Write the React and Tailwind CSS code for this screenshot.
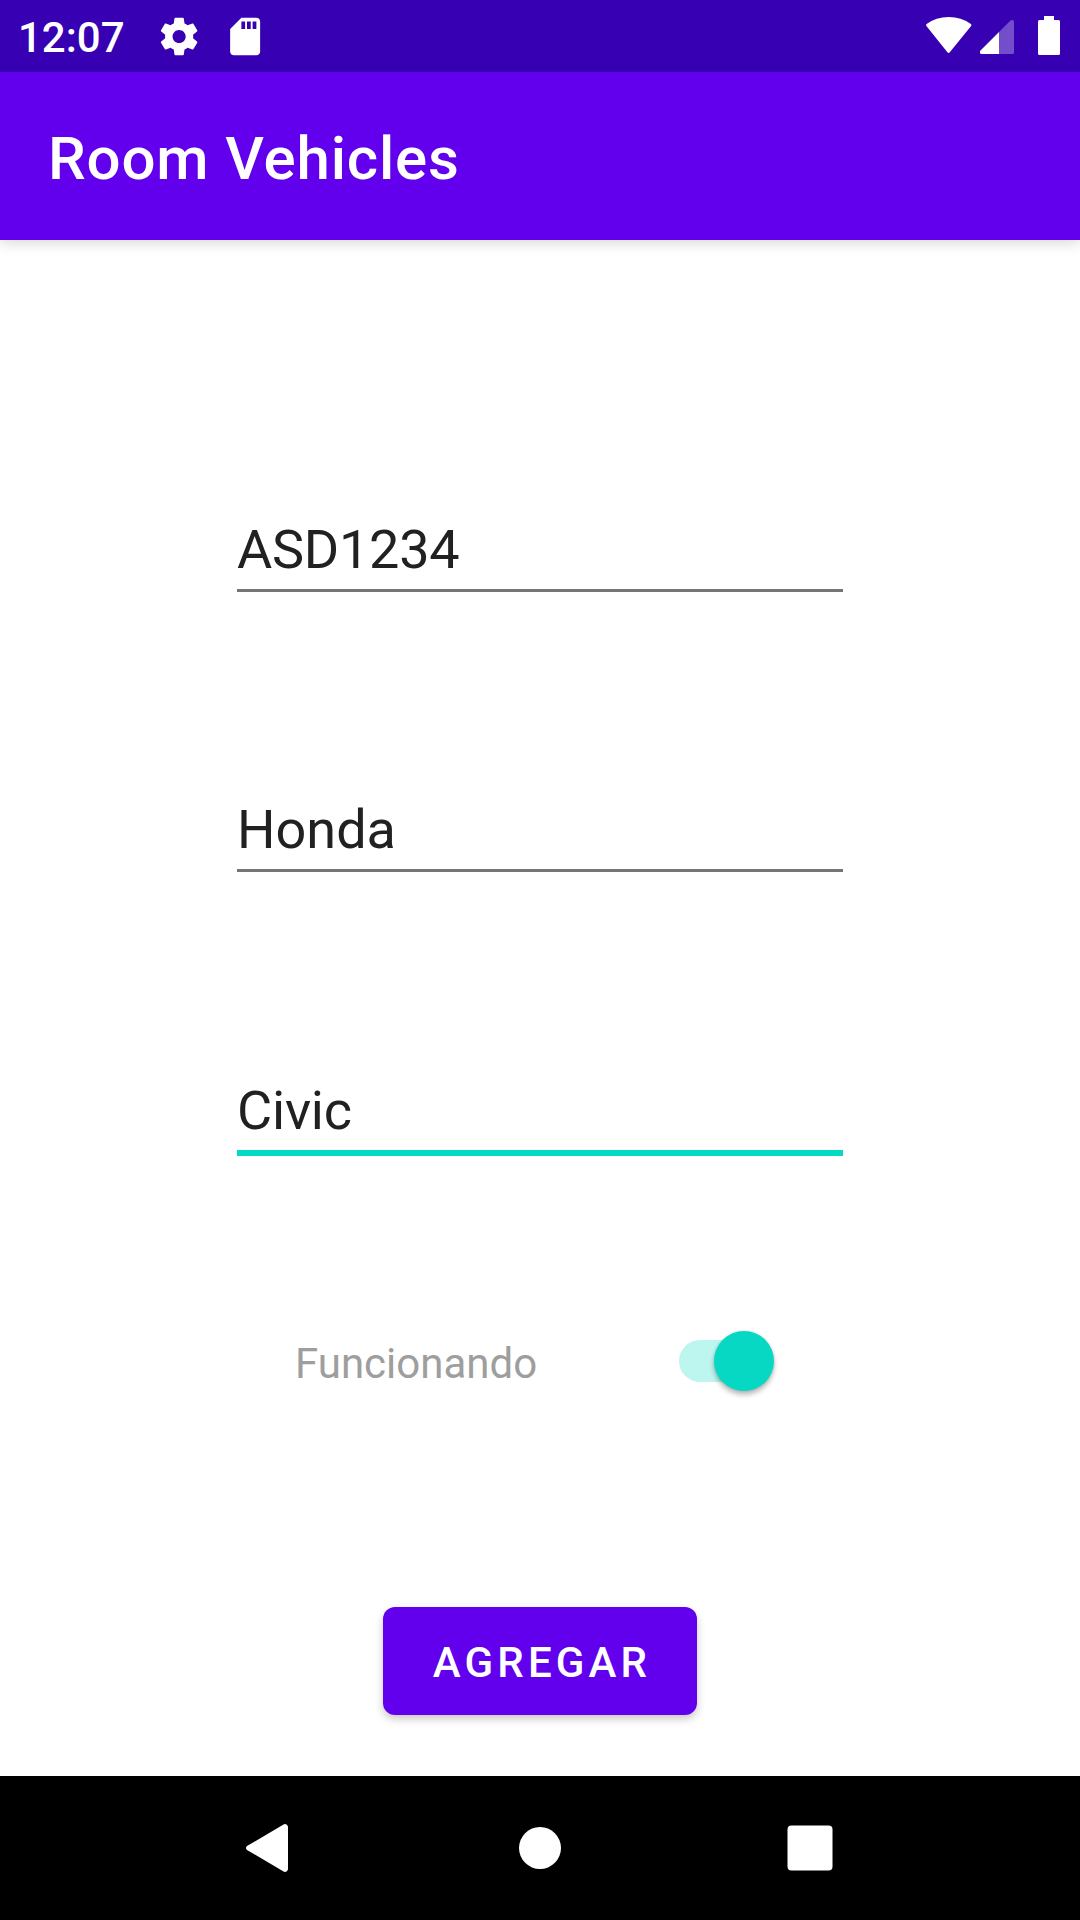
function SettingsIcon() {
  return (
    <svg className="ml-[52.5px] size-[45px]" viewBox="0 0 24 24" fill="currentColor">
      <path transform="translate(-0.2 0)" d="M19.43 12.98c.04-.32.07-.64.07-.98s-.03-.66-.07-.98l2.11-1.65c.19-.15.24-.42.12-.64l-2-3.46c-.12-.22-.39-.3-.61-.22l-2.49 1c-.52-.4-1.08-.73-1.69-.98l-.38-2.65C14.46 2.18 14.25 2 14 2h-4c-.25 0-.46.18-.49.42l-.38 2.65c-.61.25-1.17.59-1.69.98l-2.49-1c-.23-.09-.49 0-.61.22l-2 3.46c-.13.22-.07.49.12.64l2.11 1.65c-.04.32-.07.65-.07.98s.03.66.07.98l-2.11 1.65c-.19.15-.24.42-.12.64l2 3.46c.12.22.39.3.61.22l2.49-1c.52.4 1.08.73 1.69.98l.38 2.65c.03.24.24.42.49.42h4c.25 0 .46-.18.49-.42l.38-2.65c.61-.25 1.17-.59 1.69-.98l2.49 1c.23.09.49 0 .61-.22l2-3.46c.12-.22.07-.49-.12-.64l-2.11-1.65zM12 15.5c-1.93 0-3.5-1.57-3.5-3.5s1.57-3.5 3.5-3.5 3.5 1.57 3.5 3.5-1.57 3.5-3.5 3.5z" />
    </svg>
  );
}

function SdCardIcon() {
  return (
    <svg className="ml-[21px] size-[45px]" viewBox="0 0 24 24" fill="currentColor">
      <path transform="translate(-0.2 0)" d="M18 2h-8L4.02 8 4 20c0 1.1.9 2 2 2h12c1.1 0 2-.9 2-2V4c0-1.1-.9-2-2-2zm-6 6h-2V4h2v4zm3 0h-2V4h2v4zm3 0h-2V4h2v4z" />
    </svg>
  );
}

function StatusBar() {
  return (
    <header className="flex h-[72px] items-center bg-[#3700b3] pr-5 pl-[18px] text-white">
      <span className="w-[86px] pt-[3px] text-[42px] leading-[50px] font-medium whitespace-nowrap">12:07</span>
      <SettingsIcon />
      <SdCardIcon />
      <div className="ml-auto flex items-center">
        <svg className="h-[40px] w-[46px]" viewBox="0 0 46 40" fill="currentColor">
          <path d="M.4 9.9Q-.3 8.900 .6 8Q10 1 22.700 1T44.900 8Q45.800 8.900 45.100 9.900L24 36Q22.700 38 21.200 36Z" />
        </svg>
        <svg className="ml-2 h-[40px] w-[34px]" viewBox="0 0 34 40" fill="currentColor">
          <path d="M19 16V38H1.500Q0 38 0 36.500V35Z" />
          <path d="M19 16L30.500 4.500Q31 4 32.500 4Q34 4 34 5.500V36.500Q34 38 32.500 38H19Z" opacity=".3" />
        </svg>
        <svg className="ml-6 h-[40px] w-[22px]" viewBox="0 0 22 40" fill="currentColor">
          <path d="M6 0H16V4H20.500Q22 4 22 5.500V37.500Q22 39 20.500 39H1.500Q0 39 0 37.500V5.500Q0 4 1.500 4H6Z" />
        </svg>
      </div>
    </header>
  );
}

function Field({ value, className }) {
  return (
    <div className={`w-[606px] pb-[7px] text-[54px] leading-[64px] text-[#212121] ${className}`}>
      {value}
    </div>
  );
}

function Switch() {
  return (
    <div className="flex h-[60px] w-[95px] items-center">
      <div className="flex h-[42px] w-[90px] items-center justify-end rounded-full bg-[#bdf5ef]">
        <div className="-mr-[5.25px] mt-[0.5px] size-[60px] shrink-0 rounded-full bg-[#06d8c4] shadow-[0_4px_5px_rgba(0,0,0,0.26),0_0_3px_rgba(0,0,0,0.12)]" />
      </div>
    </div>
  );
}

function NavBar() {
  return (
    <nav className="flex h-36 items-center justify-between bg-black px-[240px] text-white">
      <svg className="h-[60px] w-[60px]" viewBox="0 0 60 60" fill="currentColor">
        <path d="M7 28L43.500 6.500Q45.500 5.500 47 7Q48 8 48 9V51Q48 52 47 53Q45.500 54.500 43.500 53.500L7 32Q5 30 7 28Z" />
      </svg>
      <div className="size-[42px] rounded-full bg-white" />
      <svg className="h-[60px] w-[60px]" viewBox="0 0 60 60" fill="currentColor">
        <rect x="7.500" y="7.500" width="45" height="45" rx="4" />
      </svg>
    </nav>
  );
}

export default function App() {
  return (
    <div className="flex h-[1920px] w-[1080px] flex-col overflow-hidden bg-white font-['Roboto',sans-serif]">
      <StatusBar />
      <div className="relative flex h-[168px] items-center bg-[#6200ee] px-12 shadow-[0_4px_12px_rgba(0,0,0,0.14)]">
        <h1 className="pt-[5px] text-[60px] leading-[70px] font-medium tracking-[0.84px] text-white">Room Vehicles</h1>
      </div>
      <main className="flex flex-1 flex-col items-center pt-[278px]">
        <Field value="ASD1234" className="border-b-[3px] border-[#757575] tracking-[-0.25px]" />
        <Field value="Honda" className="mt-[206px] border-b-[3px] border-[#757575]" />
        <Field value="Civic" className="mt-[207px] border-b-[6px] border-[#03dac5] tracking-[-0.2px]" />
        <div className="mt-[175px] flex h-[60px] w-[490px] items-center justify-between pr-[11px]">
          <span className="pt-[6px] text-[42px] leading-[50px] text-[#9e9e9e]">Funcionando</span>
          <Switch />
        </div>
        <button className="mt-[216px] h-[108px] w-[314px] rounded-xl bg-[#6200ee] pt-[4px] pl-[4px] text-[42px] leading-[50px] font-medium tracking-[4.15px] text-white shadow-[0_4px_8px_rgba(0,0,0,0.22)]">
          AGREGAR
        </button>
      </main>
      <NavBar />
    </div>
  );
}
